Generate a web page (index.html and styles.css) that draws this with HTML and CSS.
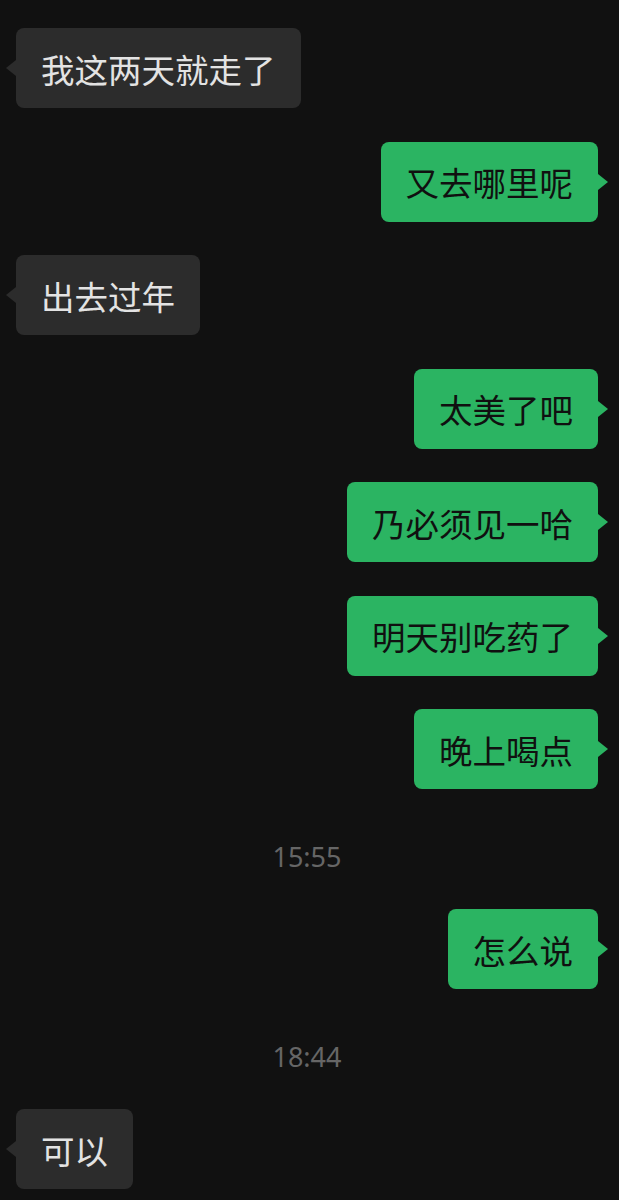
FILE: index.html
```html
<!DOCTYPE html>
<html>
<head>
    <meta charset="utf-8">
    <title>聊天</title>
    <link rel="stylesheet" href="styles.css">
</head>
<body>
    <div class="chat">
        <div class="row left"><div class="bubble">我这两天就走了</div></div>
        <div class="row right"><div class="bubble">又去哪里呢</div></div>
        <div class="row left"><div class="bubble">出去过年</div></div>
        <div class="row right"><div class="bubble">太美了吧</div></div>
        <div class="row right"><div class="bubble">乃必须见一哈</div></div>
        <div class="row right"><div class="bubble">明天别吃药了</div></div>
        <div class="row right"><div class="bubble">晚上喝点</div></div>
        <div class="time">15:55</div>
        <div class="row right"><div class="bubble">怎么说</div></div>
        <div class="time">18:44</div>
        <div class="row left"><div class="bubble">可以</div></div>
    </div>
</body>
</html>
```

FILE: styles.css
```css
body {
    margin: 0;
    background-color: #111111;
    font-family: "Noto Sans CJK SC", "Noto Sans", sans-serif;
}

.chat {
    display: flex;
    flex-direction: column;
    gap: 33.5px;
    padding: 28px 21px 0 16px;
}

.row {
    display: flex;
}

.row.right {
    justify-content: flex-end;
}

.bubble {
    position: relative;
    height: 80px;
    box-sizing: border-box;
    padding: 0 25px;
    display: flex;
    align-items: center;
    font-size: 33.5px;
    border-radius: 8px;
}

.left .bubble {
    background-color: #2c2c2c;
    color: #e3e3e3;
}

.right .bubble {
    background-color: #2bb462;
    color: #101010;
}

.bubble::after {
    content: "";
    position: absolute;
    top: 32px;
    border-top: 8px solid transparent;
    border-bottom: 8px solid transparent;
}

.left .bubble::after {
    left: -10px;
    border-right: 10px solid #2c2c2c;
}

.right .bubble::after {
    right: -10px;
    border-left: 10px solid #2bb462;
}

.time {
    margin-top: 14px;
    height: 39px;
    line-height: 39px;
    text-align: center;
    font-family: "Noto Sans", sans-serif;
    font-size: 27px;
    color: #666666;
}
```
